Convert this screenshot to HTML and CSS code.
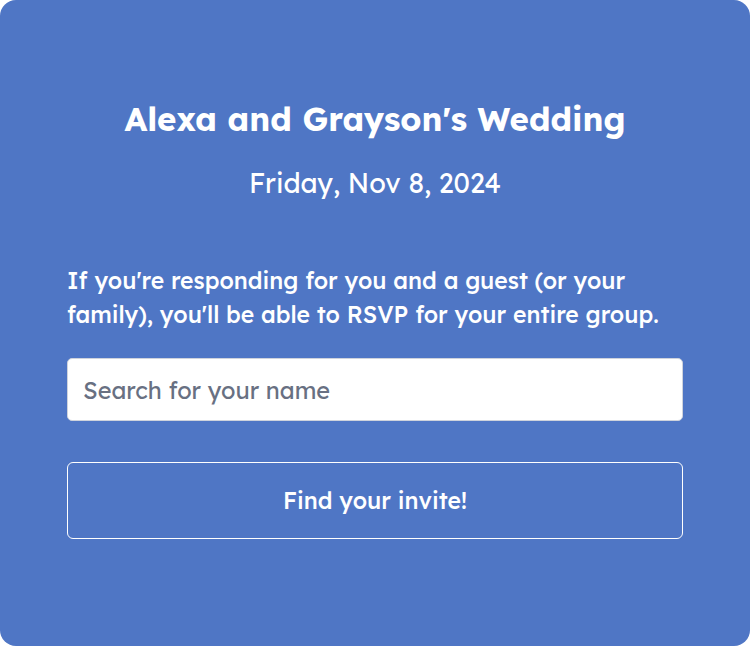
FILE: index.html
```html
<!DOCTYPE html>
<html lang="en">
<head>
  <meta charset="UTF-8">
  <meta name="viewport" content="width=device-width, initial-scale=1.0">
  <title>Alexa and Grayson's Wedding</title>
  <link rel="stylesheet" href="styles.css">
</head>
<body>
  <div class="card">
    <h1>Alexa and Grayson's Wedding</h1>
    <p class="date">Friday, Nov 8, 2024</p>

    <p class="intro">If you're responding for you and a guest (or your family), you'll be able to RSVP for your entire group.</p>

    <form class="rsvp-form">
      <input type="text" placeholder="Search for your name">
      <button type="submit">Find your invite!</button>
    </form>
  </div>
</body>
</html>
```

FILE: styles.css
```css
/* Reset & Body */
body {
  margin: 0;
  padding: 0;
  background: #ffffff;
  font-family: 'Lexend', 'Inter', sans-serif;
}

.card {
  box-sizing: border-box;
  height: 646px;
  background: #4f76c5;
  border-radius: 16px;
  padding: 97px 67px 0;
  color: #fff;
}

.card h1 {
  margin: 0;
  font-size: 33px;
  font-weight: 700;
  line-height: 44px;
  text-align: center;
}

.card .date {
  margin: 25px 0 0;
  font-size: 27px;
  font-weight: 400;
  line-height: 34px;
  text-align: center;
}

.card .intro {
  margin: 64px 0 0;
  font-size: 23px;
  font-weight: 500;
  line-height: 34px;
}

/* Form */
.rsvp-form {
  display: flex;
  flex-direction: column;
  gap: 41px;
  margin-top: 26px;
}

.rsvp-form input {
  box-sizing: border-box;
  height: 63px;
  padding: 0 15px;
  border: 1px solid #cfd3dc;
  border-radius: 5px;
  font-family: inherit;
  font-size: 23.5px;
  font-weight: 400;
  color: #333;
}

.rsvp-form input::placeholder {
  color: #687082;
}

.rsvp-form button {
  height: 77px;
  background: transparent;
  border: 1.5px solid #fff;
  border-radius: 6px;
  color: #fff;
  font-family: inherit;
  font-size: 23px;
  font-weight: 500;
  cursor: pointer;
}
```
